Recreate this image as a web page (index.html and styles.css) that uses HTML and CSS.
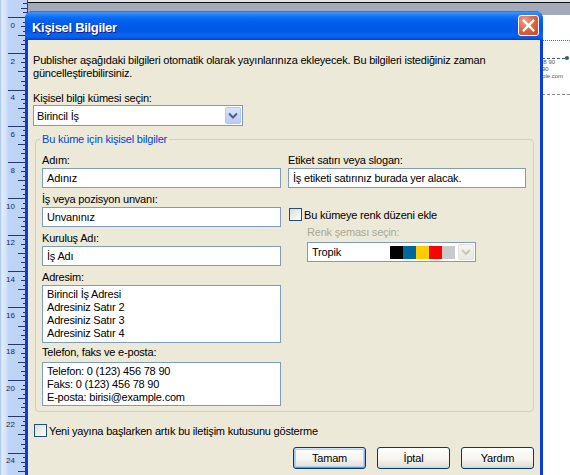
FILE: index.html
```html
<!DOCTYPE html>
<html lang="tr">
<head>
<meta charset="utf-8">
<title>Kişisel Bilgiler</title>
<link rel="stylesheet" href="styles.css">
</head>
<body>
<div class="workspace">
  <div class="ruler">
    <span class="ruler-num">0</span>
    <span class="ruler-num">2</span>
    <span class="ruler-num">4</span>
    <span class="ruler-num">6</span>
    <span class="ruler-num">8</span>
    <span class="ruler-num">10</span>
    <span class="ruler-num">12</span>
    <span class="ruler-num">14</span>
    <span class="ruler-num">16</span>
    <span class="ruler-num">18</span>
    <span class="ruler-num">20</span>
    <span class="ruler-num">22</span>
    <span class="ruler-num">24</span>
  </div>
  <div class="topbar"></div>
  <div class="page">
    <div class="guide-dotted"></div>
    <div class="handle-line"><span class="handle-bar"></span><span class="handle-dot"></span></div>
    <div class="page-text">Telefon: 0 (123) 456 78 90<br>Faks: 0 (123) 456 78 90<br>E-posta: birisi@example.com</div>
    <div class="guide-dashed"></div>
  </div>
</div>

<div class="dialog">
  <div class="titlebar">
    <span class="title">Kişisel Bilgiler</span>
    <span class="close">
      <svg width="19" height="19" viewBox="0 0 19 19"><path d="M4.8 4.8 L14.2 14.2 M14.2 4.8 L4.8 14.2" stroke="#fff" stroke-width="2.4" stroke-linecap="square" fill="none"/></svg>
    </span>
  </div>
  <div class="client">
    <p class="intro">Publisher aşağıdaki bilgileri otomatik olarak yayınlarınıza ekleyecek. Bu bilgileri istediğiniz zaman<br>güncelleştirebilirsiniz.</p>
    <div class="label set-label">Kişisel bilgi kümesi seçin:</div>
    <div class="combo combo-set">
      <span class="combo-text">Birincil İş</span>
      <span class="combo-btn">
        <svg width="16" height="17" viewBox="0 0 16 17"><path d="M4 6.5 L8 10.5 L12 6.5" stroke="#4d6185" stroke-width="2" fill="none"/></svg>
      </span>
    </div>

    <div class="group">
      <div class="group-title">Bu küme için kişisel bilgiler</div>
      <div class="group-cols">
        <div class="col">
          <div class="label">Adım:</div>
          <div class="textbox">Adınız</div>
          <div class="label">İş veya pozisyon unvanı:</div>
          <div class="textbox">Unvanınız</div>
          <div class="label">Kuruluş Adı:</div>
          <div class="textbox">İş Adı</div>
          <div class="label">Adresim:</div>
          <div class="textbox multiline addr">Birincil İş Adresi<br>Adresiniz Satır 2<br>Adresiniz Satır 3<br>Adresiniz Satır 4</div>
          <div class="label phone-label">Telefon, faks ve e-posta:</div>
          <div class="textbox multiline phone">Telefon: 0 (123) 456 78 90<br>Faks: 0 (123) 456 78 90<br>E-posta: birisi@example.com</div>
        </div>
        <div class="col">
          <div class="label">Etiket satırı veya slogan:</div>
          <div class="textbox">İş etiketi satırınız burada yer alacak.</div>
          <div class="check-row color-check"><span class="checkbox"></span><span>Bu kümeye renk düzeni ekle</span></div>
          <div class="disabled-label">Renk şeması seçin:</div>
          <div class="combo combo-color">
            <span class="combo-text">Tropik</span>
            <span class="swatches">
              <span class="swatch sw-black"></span><span class="swatch sw-blue"></span><span class="swatch sw-yellow"></span><span class="swatch sw-red"></span><span class="swatch sw-grey"></span>
            </span>
            <span class="combo-btn disabled">
              <svg width="16" height="16" viewBox="0 0 16 16"><path d="M4 6 L8 10 L12 6" stroke="#c9c7ba" stroke-width="2" fill="none"/></svg>
            </span>
          </div>
        </div>
      </div>
    </div>

    <div class="check-row bottom-check"><span class="checkbox"></span><span>Yeni yayına başlarken artık bu iletişim kutusunu gösterme</span></div>

    <div class="buttons">
      <span class="btn default">Tamam</span>
      <span class="btn">İptal</span>
      <span class="btn">Yardım</span>
    </div>
  </div>
</div>
</body>
</html>
```

FILE: styles.css
```css
* { box-sizing: border-box; }
html, body { margin: 0; padding: 0; }
body {
  width: 570px;
  height: 475px;
  overflow: hidden;
  position: relative;
  background: #fff;
  font-family: "Liberation Sans", Arial, sans-serif;
  font-size: 11px;
  color: #000;
}

/* ---------- Publisher workspace ---------- */
.workspace {
  display: grid;
  grid-template-columns: 28px 1fr;
  grid-template-rows: 15px 1fr;
  width: 570px;
  height: 475px;
}
.ruler {
  grid-row: 1 / 3;
  grid-column: 1;
  display: flex;
  flex-direction: column;
  padding-top: 21.7px;
  overflow: hidden;
  border-right: 1px solid #34466e;
  background-color: #bed3f5;
  background-image:
    repeating-linear-gradient(to bottom, transparent 0 17px, #26396a 17px 18px, transparent 18px 36.3px),
    repeating-linear-gradient(to bottom, transparent 0 17px, #26396a 17px 18px, transparent 18px 18.15px),
    repeating-linear-gradient(to bottom, transparent 0 7.925px, #26396a 7.925px 8.925px, transparent 8.925px 9.075px),
    repeating-linear-gradient(to bottom, transparent 0 3.3875px, #26396a 3.3875px 4.3875px, transparent 4.3875px 4.5375px),
    linear-gradient(to right, #a3bfee 0, #e4eefc 2px, #d2e2fa 6px, #bed3f5 9px);
  background-size: 19px 100%, 9px 100%, 6px 100%, 4px 100%, 100% 100%;
  background-position: right 0 top 0, right 0 top 0, right 0 top 0, right 0 top 0, 0 0;
  background-repeat: no-repeat;
}
.ruler-num {
  flex: none;
  height: 36.3px;
  width: 15px;
  text-align: right;
  font-size: 8px;
  line-height: 8px;
  color: #1b2b55;
}
.topbar {
  grid-row: 1;
  grid-column: 2;
  background: #a6a9b9;
  border-top: 2px solid #dfe3ea;
  box-shadow: inset 0 1px 0 #111;
}
.page {
  grid-row: 2;
  grid-column: 2;
  background: #fff;
  padding-top: 25px;
  overflow: hidden;
}
.guide-dotted { border-top: 1px dotted #3a6ee0; }
.handle-line {
  display: flex;
  align-items: center;
  height: 4px;
  margin-top: 15px;
}
.handle-bar { flex: 1; border-top: 1px dashed #2f5f70; }
.handle-dot {
  flex: none;
  width: 4px;
  height: 4px;
  border-radius: 50%;
  background: #2f5f70;
  margin-right: 1px;
}
.page-text {
  margin: -1px 0 0 457px;
  font-size: 6px;
  line-height: 7px;
  color: #555;
  white-space: nowrap;
}
.guide-dashed { margin-top: 14px; border-top: 1px dashed #8c8c8c; }

/* ---------- Dialog window ---------- */
.dialog {
  position: absolute;
  left: 25px;
  top: 11px;
  width: 518px;
  height: 470px;
  display: flex;
  flex-direction: column;
  background: #0a3cd6;
  border-radius: 8px 8px 0 0;
  letter-spacing: -0.2px;
}
.titlebar {
  flex: none;
  height: 29px;
  display: flex;
  align-items: center;
  justify-content: space-between;
  padding: 0 4px 0 7px;
  border-radius: 8px 8px 0 0;
  background: linear-gradient(to bottom,
    #0a5cee 0, #3d95ff 1px, #2a86fc 3px, #0d6ff6 6px, #0260ec 10px,
    #005ae7 16px, #0058e6 20px, #0b63ee 24px, #0a5fec 26px, #0041cf 29px);
}
.title {
  margin-top: 3px;
  color: #fff;
  font-weight: bold;
  font-size: 13px;
  letter-spacing: -0.3px;
  text-shadow: 1px 1px 0 #0f1e8c;
}
.close {
  width: 21px;
  height: 21px;
  border: 1px solid #fff;
  border-radius: 3px;
  background: radial-gradient(circle at 30% 25%, #f3a285 0, #e2653e 45%, #cc4320 100%);
  display: flex;
  align-items: center;
  justify-content: center;
}
.client {
  flex: 1;
  margin: 0 3px;
  background: #ece9d8;
  padding: 14px 6px 0 5px;
}
.intro {
  margin: 0;
  line-height: 13px;
  white-space: nowrap;
}
.label { line-height: 13px; white-space: nowrap; }
.set-label { margin-top: 12px; }

/* combo boxes */
.combo {
  display: flex;
  align-items: center;
  border: 1px solid #7f9db9;
  background: #fff;
  padding: 1px;
  white-space: nowrap;
}
.combo-text { flex: 1; padding-left: 2px; }
.combo-set { width: 210px; height: 21px; }
.combo-btn {
  flex: none;
  width: 16px;
  height: 17px;
  display: flex;
  border: 1px solid #b5c8f3;
  border-radius: 2px;
  background: linear-gradient(#d9e4fd, #b9ccf7);
}
.combo-btn svg { margin: -1px; }
.combo-btn.disabled {
  height: 16px;
  border-color: #e4e2d8;
  background: linear-gradient(#f6f5f0, #ebe9e0);
}

/* group box */
.group {
  margin: 13px 0 0 2px;
  border: 1px solid #d0d0bf;
  border-radius: 4px;
  padding: 0 7px 5px 6px;
}
.group-title {
  display: table;
  margin: -7px 0 8px -2px;
  padding: 0 2px;
  background: #ece9d8;
  color: #0046d5;
  line-height: 13px;
}
.group-cols {
  display: grid;
  grid-template-columns: 239px 238px;
  column-gap: 7px;
}
.col .label { margin-bottom: 1px; }
.textbox {
  height: 20px;
  border: 1px solid #7f9db9;
  background: #fff;
  padding: 0 4px;
  line-height: 18px;
  margin-bottom: 5px;
  white-space: nowrap;
  overflow: hidden;
}
.multiline { line-height: 13px; padding: 2px 4px; }
.addr { height: 58px; margin-bottom: 3px; }
.col .phone-label { margin-bottom: 3px; }
.phone { height: 44px; margin-bottom: 0; }

/* check boxes */
.check-row {
  display: flex;
  align-items: center;
  gap: 2px;
  height: 13px;
  white-space: nowrap;
}
.checkbox {
  flex: none;
  width: 13px;
  height: 13px;
  margin-left: 1px;
  border: 1px solid #1c5180;
  background: linear-gradient(135deg, #dcdcd7 0, #f4f4f1 70%, #fff 100%);
}
.color-check { margin-top: 20px; }
.disabled-label {
  color: #aca899;
  margin: 5px 0 3px 19px;
  line-height: 13px;
}
.combo-color { width: 169px; height: 20px; margin-left: 19px; }
.combo-color .combo-text { padding-left: 3px; }
.swatches { display: flex; margin-right: 3px; }
.swatch { width: 13px; height: 13px; }
.sw-black { background: #000; }
.sw-blue { background: #00679e; }
.sw-yellow { background: #ffcc00; }
.sw-red { background: #ff0000; }
.sw-grey { background: #c9c9c9; }

.bottom-check { margin-top: 12px; }

/* buttons */
.buttons {
  display: flex;
  justify-content: flex-end;
  gap: 11px;
  margin-top: 10px;
}
.btn {
  width: 73px;
  height: 22px;
  border: 1px solid #003c74;
  border-radius: 3px;
  background: linear-gradient(#ffffff 0, #f5f4ef 55%, #e6e3d9 88%, #d6d0c5 100%);
  display: flex;
  align-items: center;
  justify-content: center;
}
.btn.default {
  box-shadow: inset 0 1px 0 #cee7ff, inset 1px 0 0 #a8c7f2, inset -1px 0 0 #8fb2e8, inset 0 -1px 0 #6d8ee8, inset 0 0 0 2px #b6cff5;
}
```
